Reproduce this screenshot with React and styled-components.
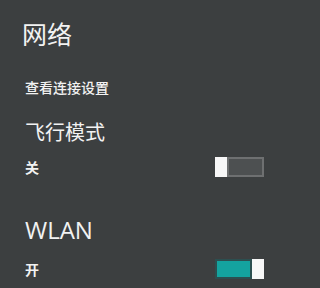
import React from 'react';
import styled, { createGlobalStyle } from 'styled-components';

const GlobalStyle = createGlobalStyle`
  html, body {
    margin: 0;
    padding: 0;
    background: #3c3f40;
  }
`;

const Panel = styled.div`
  width: 304px;
  height: 288px;
  box-sizing: border-box;
  padding: 18px 40px 0 25px;
  display: flex;
  flex-direction: column;
  background: #3c3f40;
  color: #f2f2f2;
  font-family: "Open Sans", "Noto Sans CJK SC", sans-serif;
  overflow: hidden;
`;

const Title = styled.h1`
  margin: 0 0 0 -3px;
  font-size: 25px;
  line-height: 30px;
  font-weight: 400;
  font-family: "Noto Sans CJK SC", sans-serif;
`;

const Link = styled.div`
  margin-top: 29px;
  font-size: 14px;
  line-height: 20px;
  font-weight: 500;
  font-family: "Noto Sans CJK SC", sans-serif;
`;

const SectionTitle = styled.div`
  margin-top: ${p => p.$gap}px;
  font-size: ${p => (p.$latin ? 24 : 20)}px;
  line-height: ${p => (p.$latin ? 30 : 26)}px;
  font-weight: 400;
  font-family: ${p => (p.$latin ? '"Open Sans", sans-serif' : '"Noto Sans CJK SC", sans-serif')};
`;

const Row = styled.div`
  margin-top: ${p => p.$gap}px;
  height: 20px;
  display: flex;
  align-items: center;
  justify-content: space-between;
`;

const State = styled.span`
  font-size: 14px;
  font-weight: 700;
  font-family: "Noto Sans CJK SC", sans-serif;
`;

const Switch = styled.div`
  width: 49px;
  height: 20px;
  display: flex;
  flex-direction: ${p => (p.$on ? 'row' : 'row-reverse')};
`;

const Track = styled.div`
  flex: 1;
  box-sizing: border-box;
  border: 2px solid ${p => (p.$on ? '#2c4f50' : '#6e7071')};
  background: ${p => (p.$on ? '#14a39f' : '#4d5051')};
`;

const Thumb = styled.div`
  width: 12px;
  background: #f7f7f7;
`;

const Toggle = ({ on }) => (
  <Switch $on={on}>
    <Track $on={on} />
    <Thumb />
  </Switch>
);

export default function App() {
  return (
    <>
      <GlobalStyle />
      <Panel>
        <Title>网络</Title>
        <Link>查看连接设置</Link>
        <SectionTitle $gap={22}>飞行模式</SectionTitle>
        <Row $gap={12}>
          <State>关</State>
          <Toggle on={false} />
        </Row>
        <SectionTitle $gap={38} $latin>WLAN</SectionTitle>
        <Row $gap={14}>
          <State>开</State>
          <Toggle on />
        </Row>
      </Panel>
    </>
  );
}
